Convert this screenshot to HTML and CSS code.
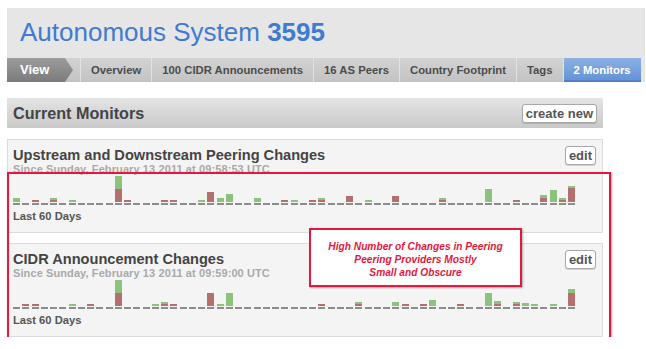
FILE: index.html
```html
<!DOCTYPE html>
<html lang="en">
<head>
  <meta charset="UTF-8">
  <meta name="viewport" content="width=device-width, initial-scale=1.0">
  <title>Autonomous System 3595</title>
  <link rel="stylesheet" href="styles.css">
</head>
<body>
  <div class="page">

    <div class="as-header">
      <h1>Autonomous System <b>3595</b></h1>
      <div class="tabs">
        <span class="tab tab-view">View</span>
        <span class="tab">Overview</span>
        <span class="tab">100 CIDR Announcements</span>
        <span class="tab">16 AS Peers</span>
        <span class="tab">Country Footprint</span>
        <span class="tab">Tags</span>
        <span class="tab tab-active">2 Monitors</span>
      </div>
    </div>

    <div class="section-bar">
      <h2>Current Monitors</h2>
      <button type="button" class="btn">create new</button>
    </div>

    <div class="monitor">
      <div class="monitor-head">
        <div class="monitor-info">
          <h3>Upstream and Downstream Peering Changes</h3>
          <div class="since">Since Sunday, February 13 2011 at 09:58:53 UTC</div>
        </div>
        <button type="button" class="btn">edit</button>
      </div>
      <div class="chart" id="chartPeering"></div>
      <div class="chart-label">Last 60 Days</div>
    </div>

    <div class="monitor">
      <div class="monitor-head">
        <div class="monitor-info">
          <h3>CIDR Announcement Changes</h3>
          <div class="since">Since Sunday, February 13 2011 at 09:59:00 UTC</div>
        </div>
        <button type="button" class="btn">edit</button>
      </div>
      <div class="chart" id="chartCidr"></div>
      <div class="chart-label">Last 60 Days</div>
    </div>

    <!-- anotacions en vermell -->
    <div class="mark-box"></div>
    <div class="mark-note">High Number of Changes in Peering<br>Peering Providers Mostly<br>Small and Obscure</div>
  </div>

  <script>
    // dia -> [verd, vermell] en px
    const peering = {0: [4, 0], 2: [0, 2], 4: [2, 2], 6: [2, 0], 11: [13, 13], 12: [0, 2], 16: [0, 2], 17: [0, 2],
      20: [2, 0], 21: [0, 10], 22: [4, 0], 23: [8, 0], 26: [4, 0], 29: [0, 2], 30: [2, 0], 32: [0, 2], 33: [2, 2],
      36: [0, 6], 38: [2, 0], 41: [0, 6], 46: [2, 2], 51: [13, 0], 54: [0, 2], 57: [3, 4], 58: [12, 0], 59: [2, 2], 60: [2, 14]};

    const cidr = {1: [0, 2], 2: [0, 2], 6: [2, 0], 8: [0, 2], 11: [13, 13], 15: [2, 0], 16: [2, 2], 17: [0, 2],
      21: [0, 13], 22: [2, 0], 23: [13, 0], 33: [0, 2], 37: [2, 2], 41: [4, 0], 42: [0, 2], 44: [0, 2], 45: [6, 0],
      48: [0, 2], 51: [13, 0], 52: [3, 2], 54: [2, 2], 55: [3, 0], 56: [2, 0], 58: [2, 0], 60: [4, 13]};

    function drawChart(id, data) {
      const chart = document.getElementById(id);
      for (let i = 0; i <= 60; i++) {
        const bar = document.createElement("div");
        bar.className = "bar";
        const v = data[i] || [0, 0];
        if (v[0]) {
          const g = document.createElement("div");
          g.className = "g";
          g.style.height = v[0] + "px";
          bar.appendChild(g);
        }
        if (v[1]) {
          const r = document.createElement("div");
          r.className = "r";
          r.style.height = v[1] + "px";
          bar.appendChild(r);
        }
        const base = document.createElement("div");
        base.className = "base";
        bar.appendChild(base);
        chart.appendChild(bar);
      }
    }

    drawChart("chartPeering", peering);
    drawChart("chartCidr", cidr);
  </script>
</body>
</html>
```

FILE: styles.css
```css
body {
  margin: 0;
  background-color: #ffffff;
  font-family: "Liberation Sans", Arial, sans-serif;
  color: #444;
}

.page {
  position: relative;
  padding: 8px 0 0 7px;
}

/* capçalera */
.as-header {
  width: 638px;
  background-color: #e6e6e6;
}

.as-header h1 {
  margin: 0;
  padding: 10px 13px 11px;
  font-size: 26px;
  line-height: 29px;
  font-weight: normal;
  color: #3f7bd2;
}

.tabs {
  display: flex;
  width: fit-content;
  height: 24px;
  background: linear-gradient(#d3d3d3, #c3c3c3);
}

.tab {
  padding: 0 10px;
  border-left: 1px solid #e2e2e2;
  font-size: 11.3px;
  font-weight: bold;
  line-height: 24px;
  color: #4c4c4c;
  white-space: nowrap;
}

.tab-view {
  width: 60px;
  padding: 0 0 0 13px;
  border-left: none;
  font-size: 13px;
  color: #ffffff;
  background: linear-gradient(#9c9c9c, #7b7b7b);
  clip-path: polygon(0 0, 58px 0, 66px 50%, 58px 100%, 0 100%);
}

.tab-active {
  color: #ffffff;
  background: linear-gradient(#8db2e3, #6090d5);
  box-shadow: inset 0 -2px 0 #4f7fc6;
}

/* barra de secció */
.section-bar {
  display: flex;
  align-items: center;
  justify-content: space-between;
  box-sizing: border-box;
  width: 596px;
  height: 30px;
  margin-top: 16px;
  padding: 0 6px;
  background: linear-gradient(#e4e4e4, #c9c9c9);
}

.section-bar h2 {
  margin: 0;
  font-size: 16.2px;
  color: #444;
}

.btn {
  height: 19px;
  padding: 0 3px;
  font-family: inherit;
  font-size: 13px;
  font-weight: bold;
  line-height: 17px;
  color: #555;
  background-color: #ffffff;
  border: 1px solid #a8a8a8;
  border-radius: 3px;
  box-shadow: 0 1px 1px rgba(0, 0, 0, 0.15);
}

/* monitors */
.monitor {
  box-sizing: border-box;
  width: 596px;
  margin-top: 11px;
  padding: 6px 6px 9px 5px;
  background-color: #f4f4f4;
  border: 1px solid #dcdcdc;
}

.monitor + .monitor {
  margin-top: 10px;
}

.monitor-head {
  display: flex;
  justify-content: space-between;
  align-items: flex-start;
}

.monitor-info {
  padding-top: 2px;
}

.monitor h3 {
  margin: 0;
  font-size: 14.6px;
  line-height: 15px;
  color: #444;
}

.since {
  font-size: 11px;
  letter-spacing: 0.1px;
  line-height: 12px;
  font-weight: bold;
  color: #a9a9a9;
}

.chart {
  display: flex;
  justify-content: space-between;
  align-items: flex-end;
  width: 562px;
  height: 30px;
}

.bar {
  display: flex;
  flex-direction: column;
  width: 7px;
}

.bar .g {
  background-color: #8cc37b;
}

.bar .r {
  background-color: #b56f6f;
}

.bar .base {
  height: 2px;
  margin-top: 1px;
  background-color: #8c8c8c;
}

.chart-label {
  margin-top: 5px;
  font-size: 11.2px;
  font-weight: bold;
  line-height: 13px;
  color: #555;
}

/* anotacions */
.mark-box {
  position: absolute;
  left: 7px;
  top: 172px;
  width: 600px;
  height: 164px;
  border: 2px solid #e8163c;
  box-shadow: 1px 1px 2px rgba(0, 0, 0, 0.3);
}

.mark-note {
  position: absolute;
  left: 309px;
  top: 228px;
  width: 209px;
  padding: 10px 0 6px;
  border: 2px solid #e8163c;
  background-color: #ffffff;
  box-shadow: 1px 1px 2px rgba(0, 0, 0, 0.3);
  color: #e8163c;
  font-size: 10.2px;
  font-weight: bold;
  font-style: italic;
  line-height: 13px;
  text-align: center;
}
```
